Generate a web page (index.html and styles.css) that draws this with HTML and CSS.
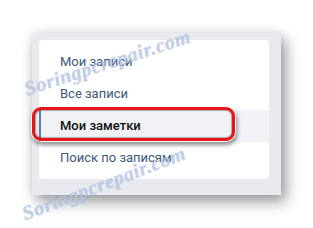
FILE: index.html
```html
<!DOCTYPE html>
<html lang="ru">
<head>
<meta charset="utf-8">
<link rel="stylesheet" href="styles.css">
</head>
<body>
<div class="stage">
  <div class="panel">
    <ul class="menu">
      <li class="item">Мои записи</li>
      <li class="item">Все записи</li>
      <li class="item item-active">Мои заметки<span class="mark"></span></li>
      <li class="item">Поиск по записям</li>
    </ul>
  </div>
  <span class="wm wm-top">Soringpcrepair.com</span>
  <span class="wm wm-bottom">Soringpcrepair.com</span>
</div>
</body>
</html>
```

FILE: styles.css
```css
html, body {
  margin: 0;
  padding: 0;
  background: #ffffff;
}
.stage {
  position: relative;
  width: 313px;
  height: 228px;
  overflow: hidden;
  padding: 33px 0 0 32px;
  box-sizing: border-box;
}
.panel {
  width: 249px;
  height: 162px;
  box-sizing: border-box;
  background: #e9eaef;
  padding: 7px 12px 16px 7px;
  box-shadow: 5px 7px 14px rgba(0, 0, 0, 0.38), 0 0 10px rgba(0, 0, 0, 0.10);
}
.menu {
  list-style: none;
  margin: 0;
  padding: 6px 0 5px;
  background: #ffffff;
  border-radius: 4px;
  height: 139px;
  box-sizing: border-box;
}
.item {
  position: relative;
  height: 32px;
  line-height: 32px;
  padding-left: 21px;
  font-family: Roboto, "Noto Sans", sans-serif;
  font-size: 13px;
  color: #3d5877;
}
.item-active {
  background: #f0f2f5;
  border-left: 2px solid #5a7fab;
  padding-left: 19px;
  color: #111111;
  font-weight: 500;
}
.mark {
  position: absolute;
  left: -9px;
  top: -3px;
  width: 203px;
  height: 34px;
  box-sizing: border-box;
  border: 3px solid #e8141b;
  border-radius: 9px;
  box-shadow: 0 0 0 1px #ffffff, 1px 3px 4px 1px rgba(0, 0, 0, 0.45), inset 0 0 1px 1px rgba(0, 0, 0, 0.3);
}
.wm {
  position: absolute;
  font-family: "Liberation Serif", serif;
  font-style: italic;
  font-weight: bold;
  font-size: 20px;
  letter-spacing: 0.6px;
  color: rgba(205, 215, 238, 0.6);
  text-shadow: 0 0 1px rgba(110, 135, 190, 0.55);
  white-space: nowrap;
  transform-origin: left center;
}
.wm-top {
  left: 25px;
  top: 78px;
  transform: rotate(-18deg);
}
.wm-bottom {
  left: 23px;
  top: 203px;
  transform: rotate(-21deg);
}
```
